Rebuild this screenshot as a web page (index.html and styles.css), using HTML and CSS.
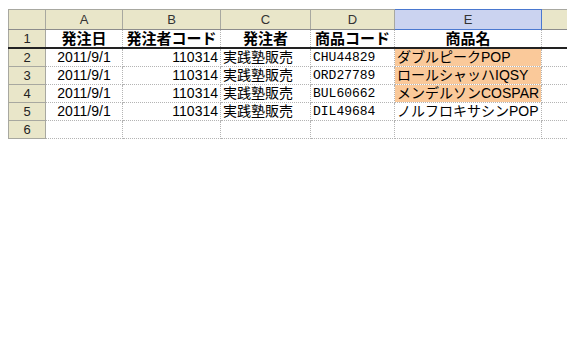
FILE: index.html
```html
<!DOCTYPE html>
<html lang="ja">
<head>
    <meta charset="UTF-8">
    <title>発注データ</title>
    <link rel="stylesheet" href="styles.css">
</head>
<body>
    <div class="sheet">
        <table class="grid">
            <colgroup>
                <col class="c-hdr">
                <col class="c-a">
                <col class="c-b">
                <col class="c-c">
                <col class="c-d">
                <col class="c-e">
                <col class="c-f">
            </colgroup>
            <tr class="col-heads">
                <th class="corner"></th>
                <th>A</th>
                <th>B</th>
                <th>C</th>
                <th>D</th>
                <th class="selected">E</th>
                <th></th>
            </tr>
            <tr class="title-row">
                <th class="row-num">1</th>
                <td>発注日</td>
                <td>発注者コード</td>
                <td>発注者</td>
                <td>商品コード</td>
                <td>商品名</td>
                <td></td>
            </tr>
            <tr>
                <th class="row-num">2</th>
                <td class="date">2011/9/1</td>
                <td class="num">110314</td>
                <td>実践塾販売</td>
                <td class="code">CHU44829</td>
                <td class="mark">ダブルピークPOP</td>
                <td></td>
            </tr>
            <tr>
                <th class="row-num">3</th>
                <td class="date">2011/9/1</td>
                <td class="num">110314</td>
                <td>実践塾販売</td>
                <td class="code">ORD27789</td>
                <td class="mark">ロールシャッハIQSY</td>
                <td></td>
            </tr>
            <tr>
                <th class="row-num">4</th>
                <td class="date">2011/9/1</td>
                <td class="num">110314</td>
                <td>実践塾販売</td>
                <td class="code">BUL60662</td>
                <td class="mark">メンデルソンCOSPAR</td>
                <td></td>
            </tr>
            <tr>
                <th class="row-num">5</th>
                <td class="date">2011/9/1</td>
                <td class="num">110314</td>
                <td>実践塾販売</td>
                <td class="code">DIL49684</td>
                <td>ノルフロキサシンPOP</td>
                <td></td>
            </tr>
            <tr>
                <th class="row-num">6</th>
                <td></td>
                <td></td>
                <td></td>
                <td></td>
                <td></td>
                <td></td>
            </tr>
        </table>
    </div>
</body>
</html>
```

FILE: styles.css
```css
body {
    margin: 0;
    background: #ffffff;
    font-family: "Liberation Sans", "Noto Sans CJK JP", sans-serif;
}

.sheet {
    width: 567px;
    height: 340px;
    overflow: hidden;
    padding: 9px 0 0 8px;
    box-sizing: border-box;
}

.grid {
    border-collapse: collapse;
    table-layout: fixed;
    width: 600px;
    font-size: 14px;
    color: #000;
}

.c-hdr { width: 37px; }
.c-a { width: 77px; }
.c-b { width: 98px; }
.c-c { width: 90px; }
.c-d { width: 84px; }
.c-e { width: 147px; }
.c-f { width: 67px; }

.grid th,
.grid td {
    height: 17px;
    padding: 0 2px;
    border: 1px dotted #b4b4b4;
    white-space: nowrap;
    overflow: hidden;
    line-height: 17px;
}

.col-heads th {
    height: 19px;
    font-weight: normal;
    font-size: 13px;
    color: #333;
    text-align: center;
    background: repeating-conic-gradient(#fbf9e0 0 25%, #d6d3b2 0 50%) 0 0 / 2px 2px;
    border: 1px solid #a8a8a0;
    border-bottom: 1px solid #8c8c8c;
}

.col-heads th.selected {
    background: repeating-conic-gradient(#e2e8fb 0 25%, #b4bde4 0 50%) 0 0 / 2px 2px;
    border: 1px solid #4a78d0;
}

.row-num {
    font-weight: normal;
    font-size: 13px;
    color: #222;
    text-align: center;
    background: repeating-conic-gradient(#fbf9e0 0 25%, #d6d3b2 0 50%) 0 0 / 2px 2px;
    border: 1px solid #a8a8a0 !important;
}

.title-row td {
    font-weight: bold;
    font-size: 15px;
    text-align: center;
    border-bottom: 2px solid #222;
}

.title-row th {
    border-bottom: 2px solid #222 !important;
}

.date {
    text-align: center;
}

.num {
    text-align: right;
}

.code {
    font-family: "Liberation Mono", "Noto Sans CJK JP", monospace;
    font-size: 13px;
}

.mark {
    background: repeating-conic-gradient(#fdd2a8 0 25%, #f6c08c 0 50%) 0 0 / 2px 2px;
}
```
